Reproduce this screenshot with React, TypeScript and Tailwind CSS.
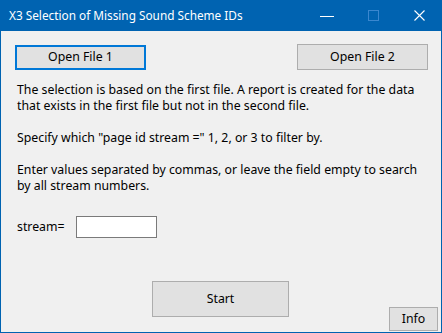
export default function App() {
  const font = { fontFamily: '"Noto Sans", "Liberation Sans", sans-serif' };

  return (
    <div
      className="w-[442px] h-[333px] bg-[#0063b1] flex flex-col text-[12.3px] text-black"
      style={font}
    >
      {/* title bar */}
      <div className="h-[31px] flex items-center text-white">
        <div className="pl-[9px] flex-1 leading-none text-[11.8px]">
          X3 Selection of Missing Sound Scheme IDs
        </div>
        <div className="w-[46px] h-[31px] flex items-center justify-center">
          <svg width="14" height="14" viewBox="0 0 14 14">
            <line x1="0" y1="7.5" x2="14" y2="7.5" stroke="#fff" strokeWidth="1" />
          </svg>
        </div>
        <div className="w-[46px] h-[31px] flex items-center justify-center">
          <svg width="11" height="11" viewBox="0 0 11 11">
            <rect x="0.5" y="0.5" width="10" height="10" fill="none" stroke="#3a87cf" strokeWidth="1" />
          </svg>
        </div>
        <div className="w-[46px] h-[31px] flex items-center justify-center">
          <svg width="11" height="11" viewBox="0 0 11 11">
            <path d="M0.5 0.5 L10.5 10.5 M10.5 0.5 L0.5 10.5" stroke="#fff" strokeWidth="1.1" />
          </svg>
        </div>
      </div>

      {/* client area */}
      <div className="flex-1 mx-px mb-px bg-[#f0f0f0] flex flex-col">
        <div className="flex justify-between pl-[14px] pr-[13px] mt-[14px]">
          <button className="w-[131px] h-[25px] border-2 border-[#0078d7] bg-[#e1e1e1] leading-none">
            Open File 1
          </button>
          <button className="w-[131px] h-[26px] -mt-px border border-[#adadad] bg-[#e1e1e1] leading-none">
            Open File 2
          </button>
        </div>

        <div className="mt-[12px] pl-[16px] leading-[16px] whitespace-pre-line">
          {"The selection is based on the first file. A report is created for the data\nthat exists in the first file but not in the second file.\n\nSpecify which \"page id stream =\" 1, 2, or 3 to filter by.\n\nEnter values separated by commas, or leave the field empty to search\nby all stream numbers."}
        </div>

        <div className="mt-[22px] pl-[16px] flex items-center">
          <span className="w-[59px]">stream=</span>
          <input className="w-[81px] h-[22px] border border-[#7a7a7a] bg-white outline-none px-1" />
        </div>

        <div className="mt-[43px] flex h-[50px]">
          <button className="ml-[151px] w-[137px] h-[36px] border border-[#adadad] bg-[#e1e1e1] leading-none">
            Start
          </button>
          <button className="ml-auto mr-[3px] self-end w-[49px] h-[24px] border border-[#adadad] bg-[#e1e1e1] leading-none">
            Info
          </button>
        </div>
      </div>
    </div>
  );
}
